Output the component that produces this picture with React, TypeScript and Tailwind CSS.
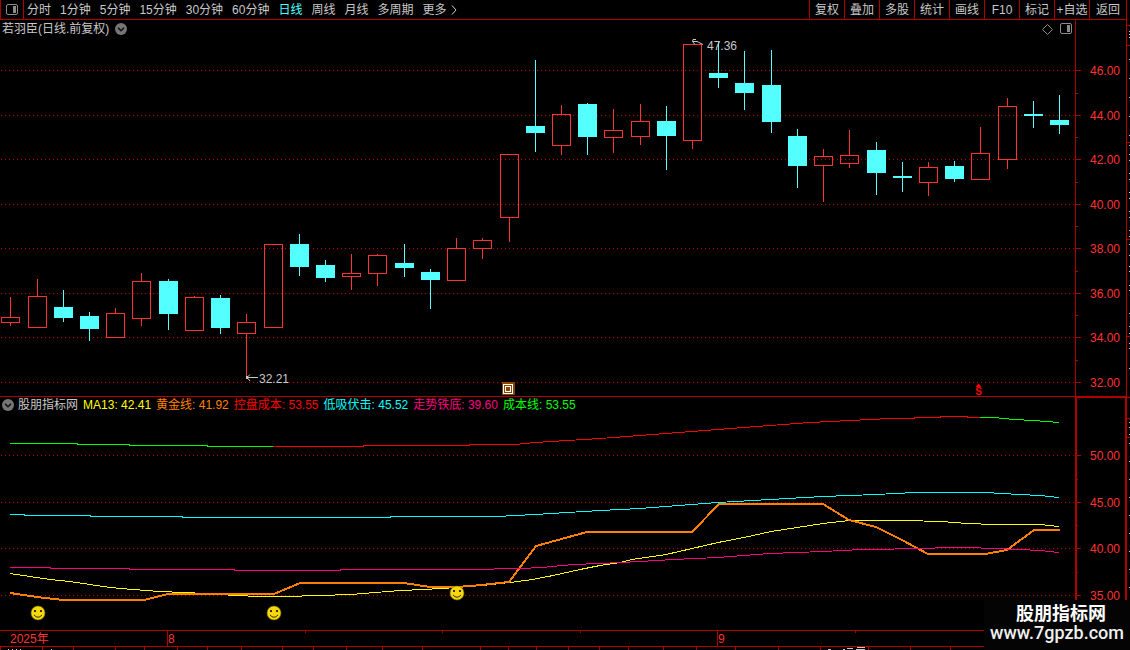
import React, { useState } from 'react';

type Candle = [x: number, up: 0 | 1, high: number, top: number, bottom: number, low: number];
type Point = [number, number];

const RED = '#ff3232';
const CYAN = '#54ffff';
const LINE = '#b00000';

const PERIODS = ['分时', '1分钟', '5分钟', '15分钟', '30分钟', '60分钟', '日线', '周线', '月线', '多周期'];
const TOOLS = ['复权', '叠加', '多股', '统计', '画线', 'F10', '标记', '+自选', '返回'];

const LEGEND = [
  { name: 'MA13', value: '42.41', color: 'text-[#ffff00]' },
  { name: '黄金线', value: '41.92', color: 'text-[#ff8000]' },
  { name: '控盘成本', value: '53.55', color: 'text-[#ff0000]' },
  { name: '低吸伏击', value: '45.52', color: 'text-[#00ffff]' },
  { name: '走势铁底', value: '39.60', color: 'text-[#ff0080]' },
  { name: '成本线', value: '53.55', color: 'text-[#00ff00]' },
];

const CANDLES: Candle[] = [
  [10, 1, 297, 317, 323, 326],
  [37, 1, 279, 296, 328, 328],
  [63, 0, 290, 307, 318, 322],
  [89, 0, 312, 316, 329, 341],
  [115, 1, 308, 313, 338, 338],
  [141, 1, 273, 281, 319, 326],
  [168, 0, 279, 281, 314, 330],
  [194, 1, 296, 297, 331, 331],
  [220, 0, 295, 298, 328, 334],
  [246, 1, 314, 322, 334, 376],
  [273, 1, 244, 244, 328, 328],
  [299, 0, 234, 244, 267, 276],
  [325, 0, 260, 265, 278, 282],
  [351, 1, 254, 273, 277, 290],
  [377, 1, 254, 255, 274, 286],
  [404, 0, 244, 263, 268, 277],
  [430, 0, 269, 272, 280, 309],
  [456, 1, 238, 248, 281, 281],
  [482, 1, 238, 240, 249, 259],
  [509, 1, 154, 154, 218, 242],
  [535, 0, 60, 126, 133, 152],
  [561, 1, 105, 114, 146, 155],
  [587, 0, 103, 104, 137, 155],
  [613, 1, 109, 130, 138, 153],
  [640, 1, 104, 121, 137, 145],
  [666, 0, 106, 121, 136, 170],
  [692, 1, 44, 44, 141, 149],
  [718, 0, 41, 73, 78, 88],
  [744, 0, 51, 83, 93, 110],
  [771, 0, 50, 85, 122, 133],
  [797, 0, 129, 136, 166, 188],
  [823, 1, 149, 156, 166, 202],
  [849, 1, 130, 155, 164, 168],
  [876, 0, 142, 150, 173, 195],
  [902, 0, 162, 176, 178, 192],
  [928, 1, 162, 167, 183, 196],
  [954, 0, 161, 166, 179, 182],
  [980, 1, 127, 153, 180, 180],
  [1007, 1, 98, 106, 160, 169],
  [1033, 0, 101, 114, 116, 128],
  [1059, 0, 95, 120, 125, 134],
];

const PRICE_AXIS: [string, number][] = [
  ['46.00', 70], ['44.00', 115], ['42.00', 159], ['40.00', 204],
  ['38.00', 248], ['36.00', 293], ['34.00', 337], ['32.00', 382],
];
const PRICE_MINOR = [93, 137, 182, 226, 271, 315, 360];

const INDICATOR_AXIS: [string, number][] = [['50.00', 455], ['45.00', 502], ['40.00', 548], ['35.00', 595]];
const INDICATOR_MINOR = [479, 525, 572];

const COST_GREEN_LEFT: Point[] = [[10, 443], [77, 443], [78, 444], [129, 444], [130, 445], [207, 445], [208, 446], [273, 446]];
const COST_RED: Point[] = [
  [273, 446], [363, 446], [364, 445], [469, 445], [470, 444], [515, 444], [535, 442], [600, 438], [666, 433],
  [718, 429], [770, 425], [810, 422], [850, 420], [890, 418], [914, 418], [915, 417], [940, 417], [941, 416], [967, 416], [968, 417], [980, 417],
];
const COST_GREEN_RIGHT: Point[] = [[980, 417], [994, 417], [1014, 419], [1033, 420], [1047, 421], [1059, 422]];
const AMBUSH: Point[] = [
  [10, 514], [24, 514], [25, 515], [90, 515], [91, 516], [182, 516], [183, 517], [390, 517], [391, 516], [497, 516],
  [535, 514], [600, 510], [640, 508], [692, 504], [718, 502], [770, 499], [823, 496], [876, 494], [915, 492], [987, 492],
  [1001, 493], [1020, 494], [1040, 495], [1059, 497],
];
const MA13: Point[] = [
  [10, 573], [30, 576], [50, 579], [70, 581], [90, 584], [110, 587], [133, 589], [160, 591], [183, 592], [207, 593],
  [235, 595], [260, 596], [285, 596], [320, 595], [351, 594], [400, 590], [424, 589], [457, 587], [482, 585], [510, 582],
  [533, 579], [553, 575], [580, 569], [600, 565], [620, 562], [632, 559], [666, 554], [692, 548], [718, 542], [744, 537],
  [771, 531], [797, 527], [823, 523], [849, 520], [905, 520], [941, 521], [968, 523], [994, 524], [1040, 524], [1059, 526],
];
const IRON_FLOOR: Point[] = [
  [10, 567], [50, 567], [51, 568], [129, 568], [130, 569], [234, 569], [235, 570], [340, 570], [341, 569], [469, 569],
  [520, 568], [542, 567], [573, 564], [600, 563], [640, 561], [673, 559], [718, 557], [770, 553], [823, 551], [862, 549],
  [928, 548], [942, 547], [967, 547], [994, 548], [1020, 549], [1040, 550], [1059, 552],
];
const GOLD: Point[] = [
  [10, 593], [37, 597], [63, 600], [144, 600], [168, 594], [274, 594], [300, 583], [404, 583], [430, 587], [457, 587],
  [482, 585], [509, 582], [536, 546], [587, 532], [692, 532], [719, 504], [823, 504], [849, 520], [876, 527], [902, 540],
  [928, 554], [985, 554], [1007, 550], [1034, 530], [1060, 530],
];

const SMILEYS: Point[] = [[38, 613], [274, 613], [457, 593]];

// Top edge of the tab strip that runs under the chart
const TAB_EDGES = [0, 42, 73, 115, 144, 177, 207, 241, 282, 313, 346, 382, 422, 480, 508, 536, 568, 599, 628, 663, 696, 735, 778, 820, 868, 910, 950];
const TAB_MARKS: [x: number, y: number, width: number][] = [
  [8, 649, 1], [12, 649, 1], [16, 649, 1], [20, 649, 1], [51, 649, 1],
  [828, 649, 3], [843, 649, 2], [847, 648, 6], [856, 649, 9], [857, 647, 8],
];

const QUOTE_DIVIDERS = [25, 45, 142, 239, 336, 397, 418, 437];
const QUOTE_MARKS = [
  31, 34, 37, 59, 78, 97, 116, 135, 145, 154, 160, 173, 179, 192, 198, 211, 217, 230, 236, 244, 255, 266, 271, 285,
  290, 313, 326, 333, 343, 348, 368, 422, 427, 434, 443, 461, 479, 497, 515, 533, 551, 569, 587,
];

const PanelIcon: React.FC = () => (
  <svg width="12" height="12" viewBox="0 0 12 12" aria-hidden="true">
    <rect x="0.5" y="0.5" width="11" height="10" rx="1.5" fill="none" stroke="#8c8c8c" />
    <rect x="7" y="2" width="3" height="7" fill="#8c8c8c" />
  </svg>
);

const ChevronBadge: React.FC = () => (
  <svg width="12" height="12" viewBox="0 0 12 12" aria-hidden="true">
    <circle cx="6" cy="6" r="6" fill="#767676" />
    <path d="M3 4.7 L6 7.7 L9 4.7" fill="none" stroke="#101010" strokeWidth="1.6" />
  </svg>
);

const Curve: React.FC<{ points: Point[]; color: string; width?: number }> = ({ points, color, width = 1 }) => (
  <polyline
    points={points.map(([x, y]) => (width === 1 ? `${x},${y + 0.5}` : `${x},${y}`)).join(' ')}
    fill="none"
    stroke={color}
    strokeWidth={width}
    shapeRendering="crispEdges"
  />
);

const Axis: React.FC<{ labels: [string, number][]; minor: number[] }> = ({ labels, minor }) => (
  <g>
    {labels.map(([label, y]) => (
      <g key={label}>
        <line x1="1" x2="1075" y1={y + 0.5} y2={y + 0.5} stroke={LINE} strokeDasharray="1 3" shapeRendering="crispEdges" />
        <rect x="1076" y={y} width="5" height="1" fill={LINE} />
        <text x="1090" y={y + 5} fill={RED} fontSize="12">{label}</text>
      </g>
    ))}
    {minor.map((y) => (
      <rect key={y} x="1076" y={y} width="2" height="1" fill={LINE} />
    ))}
  </g>
);

const CandleShape: React.FC<{ candle: Candle }> = ({ candle: [x, up, high, top, bottom, low] }) => {
  const color = up ? RED : CYAN;
  return (
    <g>
      <rect x={x} y={high} width="1" height={top - high} fill={color} />
      <rect x={x} y={bottom} width="1" height={low - bottom} fill={color} />
      {up ? (
        <rect x={x - 8.5} y={top + 0.5} width="18" height={bottom - top - 1} fill="none" stroke={RED} />
      ) : (
        <rect x={x - 9} y={top} width="19" height={bottom - top} fill={CYAN} />
      )}
    </g>
  );
};

const Smiley: React.FC<{ at: Point }> = ({ at: [x, y] }) => (
  <g>
    <circle cx={x} cy={y} r="7" fill="#f5d90c" stroke="#7d6a00" strokeWidth="0.6" />
    <rect x={x - 4} y={y - 3} width="2" height="2" fill="#3c3000" />
    <rect x={x + 2} y={y - 3} width="2" height="2" fill="#3c3000" />
    <path d={`M${x - 4} ${y + 2} Q${x} ${y + 6.5} ${x + 4} ${y + 2}`} fill="none" stroke="#3c3000" />
  </g>
);

const PriceChart: React.FC = () => (
  <svg viewBox="0 20 1126 376" className="block w-full" role="img" aria-label="日线">
    <Axis labels={PRICE_AXIS} minor={PRICE_MINOR} />
    <rect x="1075" y="20" width="1" height="376" fill={LINE} />
    {CANDLES.map((candle) => (
      <CandleShape key={candle[0]} candle={candle} />
    ))}

    {/* High / low callouts */}
    <g fill="none" stroke="#c8c8c8">
      <path d="M246 377.5 H258 M250 374.5 L247 377.5 L250 381" />
      <path d="M696 39.5 H693 L692.5 41.5 L695 44.5 M693 41.5 L697 41.5 L703 44.5" />
    </g>
    <rect x="246" y="376" width="2" height="3" fill="#c8c8c8" />
    <text x="259" y="383" fill="#c8c8c8" fontSize="12">32.21</text>
    <text x="707" y="50" fill="#c8c8c8" fontSize="12">47.36</text>

    {/* Event markers */}
    <rect x="502" y="382" width="13" height="13" fill="#8a4400" />
    <rect x="503.5" y="384.5" width="9" height="9" fill="none" stroke="#ffffff" />
    <rect x="505.5" y="386.5" width="5" height="5" fill="none" stroke="#ffffff" />
    <path d="M978.5 383.5 L981.5 387 H975.5 Z" fill="#ff0000" />
    <text x="978.5" y="395" fill="#ff0000" fontSize="10" fontWeight="700" textAnchor="middle">S</text>
  </svg>
);

const IndicatorChart: React.FC = () => (
  <svg viewBox="0 397 1126 253" className="block w-full" role="img" aria-label="股朋指标网">
    <Axis labels={INDICATOR_AXIS} minor={INDICATOR_MINOR} />
    <path d="M1075 397 H1126 V630 H1125 V398 H1077 V630 H1075 Z" fill={LINE} />

    <Curve points={COST_GREEN_LEFT} color="#00ff00" />
    <Curve points={COST_RED} color="#ff0000" />
    <Curve points={COST_GREEN_RIGHT} color="#00ff00" />
    <Curve points={AMBUSH} color="#00ffff" />
    <Curve points={MA13} color="#ffff00" />
    <Curve points={GOLD} color="#ff8000" width={2} />
    <Curve points={IRON_FLOOR} color="#ff0080" />
    {SMILEYS.map((at) => (
      <Smiley key={at[0]} at={at} />
    ))}

    {/* Time axis */}
    <g fill={LINE}>
      <rect x="0" y="630" width="1126" height="1" />
      <rect x="0" y="646" width="1126" height="1" />
      <rect x="167" y="631" width="1" height="15" />
      <rect x="717" y="631" width="1" height="15" />
      {[305, 442, 580, 855].map((x) => (
        <rect key={x} x={x} y="631" width="1" height="2" />
      ))}
      {TAB_EDGES.map((x) => (
        <rect key={x} x={x} y="647" width="1" height="3" />
      ))}
    </g>
    {TAB_MARKS.map(([x, y, width]) => (
      <rect key={x} x={x} y={y} width={width} height="1" fill="#c8c8c8" />
    ))}
    <g fill={RED} fontSize="12">
      <text x="10" y="643">2025年</text>
      <text x="168" y="643">8</text>
      <text x="718" y="643">9</text>
    </g>
  </svg>
);

const App: React.FC = () => {
  const [period, setPeriod] = useState('日线');

  return (
    <div className="relative flex w-full overflow-hidden bg-black font-['Liberation_Sans','Noto_Sans_CJK_SC',sans-serif] text-xs text-[#c8c8c8]">
      <main className="min-w-0 flex-1">
        {/* Toolbar */}
        <header className="flex h-5 items-stretch border-b border-[#b00000]">
          <button type="button" aria-label="侧栏" className="flex w-6 shrink-0 items-center justify-center border-x border-[#b00000]">
            <PanelIcon />
          </button>
          <nav className="flex items-center gap-[9px] pl-[3px] leading-[18px] whitespace-nowrap">
            {PERIODS.map((name) => (
              <button
                key={name}
                type="button"
                onClick={() => setPeriod(name)}
                className={name === period ? 'text-[#54ffff]' : 'hover:text-white'}
              >
                {name}
              </button>
            ))}
            <button type="button" className="flex items-center gap-1">
              更多
              <svg width="6" height="10" viewBox="0 0 6 10" aria-hidden="true">
                <path d="M1 0.5 L5 5 L1 9.5" fill="none" stroke="#c8c8c8" />
              </svg>
            </button>
          </nav>
          <div className="ml-auto flex whitespace-nowrap">
            {TOOLS.map((name) => (
              <button
                key={name}
                type="button"
                className="w-[35px] border-l border-[#b00000] leading-[18px] last:w-[37px] hover:text-white"
              >
                {name}
              </button>
            ))}
          </div>
        </header>

        {/* Candlestick panel */}
        <section className="relative border-b border-[#b00000]">
          <PriceChart />
          <div className="absolute inset-x-0 top-0 flex h-[18px] items-center pl-0.5">
            <h1>若羽臣(日线.前复权)</h1>
            <button type="button" aria-label="展开" className="ml-1.5">
              <ChevronBadge />
            </button>
            <div className="mr-[54px] ml-auto flex items-center gap-[7px]">
              <button type="button" aria-label="标记点">
                <svg width="11" height="11" viewBox="0 0 11 11" aria-hidden="true">
                  <path d="M5.5 0.5 L10.5 5.5 L5.5 10.5 L0.5 5.5 Z" fill="none" stroke="#8c8c8c" />
                </svg>
              </button>
              <button type="button" aria-label="面板">
                <PanelIcon />
              </button>
            </div>
          </div>
        </section>

        {/* Indicator panel */}
        <section className="relative">
          <IndicatorChart />
          <div className="absolute top-0 left-0 flex h-4 items-center gap-[5px] pl-0.5 whitespace-nowrap">
            <button type="button" className="flex items-center gap-1">
              <ChevronBadge />
              股朋指标网
            </button>
            {LEGEND.map(({ name, value, color }) => (
              <span key={name} className={color}>
                {name}: {value}
              </span>
            ))}
          </div>
        </section>
      </main>

      {/* Edge of the quote panel */}
      <aside className="w-1 shrink-0 border-l border-[#b00000]">
        <svg viewBox="0 0 3 650" preserveAspectRatio="none" className="block h-full w-full" aria-hidden="true">
          {QUOTE_DIVIDERS.map((y) => (
            <rect key={y} x="0" y={y} width="3" height="1" fill={LINE} />
          ))}
          {QUOTE_MARKS.map((y) => (
            <rect key={y} x="2" y={y} width="1" height="1" fill="#c8c8c8" />
          ))}
        </svg>
      </aside>

      <a
        href="#site"
        className="absolute right-0 bottom-0 flex h-[50px] w-[146px] flex-col items-center bg-[#040404] pt-1 font-[Roboto,'Noto_Sans_CJK_SC',sans-serif] whitespace-nowrap text-white"
      >
        <span className="pl-2 text-lg leading-5 font-bold">股朋指标网</span>
        <span className="text-lg leading-[18px] font-medium text-[#f0f0f0]">www.7gpzb.com</span>
      </a>
    </div>
  );
};

export default App;
